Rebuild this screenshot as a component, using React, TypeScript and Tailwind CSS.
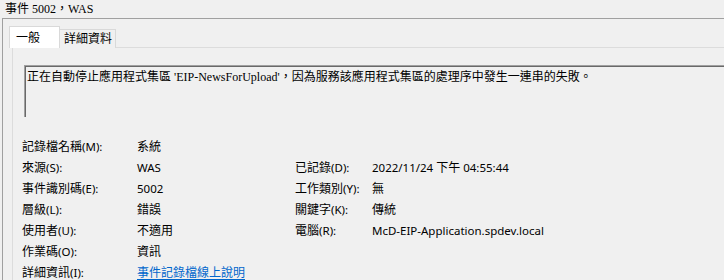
import React from 'react';

const serif = "font-['Liberation_Serif','Noto_Sans_CJK_TC',serif]";

function Zh({ children }: { children: React.ReactNode }) {
  return <span className="text-[12px]">{children}</span>;
}

function Label({ zh, k }: { zh: string; k: string }) {
  return (
    <span>
      <Zh>{zh}</Zh>({k}):
    </span>
  );
}

const rows: [React.ReactNode, React.ReactNode, React.ReactNode, React.ReactNode][] = [
  [<Label zh="記錄檔名稱" k="M" />, <Zh>系統</Zh>, null, null],
  [<Label zh="來源" k="S" />, 'WAS', <Label zh="已記錄" k="D" />, <span>2022/11/24 <Zh>下午</Zh> 04:55:44</span>],
  [<Label zh="事件識別碼" k="E" />, '5002', <Label zh="工作類別" k="Y" />, <Zh>無</Zh>],
  [<Label zh="層級" k="L" />, <Zh>錯誤</Zh>, <Label zh="關鍵字" k="K" />, <Zh>傳統</Zh>],
  [<Label zh="使用者" k="U" />, <Zh>不適用</Zh>, <Label zh="電腦" k="R" />, 'McD-EIP-Application.spdev.local'],
  [<Label zh="作業碼" k="O" />, <Zh>資訊</Zh>, null, null],
  [
    <Label zh="詳細資訊" k="I" />,
    <a href="#" className="text-[#0066cc] underline underline-offset-2">
      <Zh>事件記錄檔線上說明</Zh>
    </a>,
    null,
    null,
  ],
];

export default function App() {
  return (
    <div className="w-[724px] h-[280px] bg-[#f0f0f0] overflow-hidden flex flex-col text-black">
      <div className={`h-[22px] pl-[5px] flex items-center text-[12px] ${serif}`}>事件 5002，WAS</div>

      <div className="ml-[2px] flex-1 border-t border-l border-[#a0a0a0] pt-[7px]">
        <div className={`relative z-10 ml-[6px] h-[22px] flex items-end text-[12px] ${serif}`}>
          <div className="w-[51px] h-[22px] bg-white border border-b-0 border-[#d9d9d9] pl-[6px] flex items-center">
            一般
          </div>
          <div className="w-[56px] h-[19px] bg-[#f0f0f0] border border-b-0 border-l-0 border-[#d9d9d9] pl-[4px] flex items-center">
            詳細資料
          </div>
        </div>

        <div className="ml-[9px] -mt-px h-full border-t border-l border-[#dcdcdc]">
          <div className="ml-[11px] mt-[17px] h-[52px] border-t border-l border-[#a0a0a0]">
            <div className={`h-full border-t border-l border-[#696969] pl-[1px] pt-[2px] leading-[16px] text-[12px] whitespace-nowrap ${serif}`}>
              正在自動停止應用程式集區 'EIP-NewsForUpload'，因為服務該應用程式集區的處理序中發生一連串的失敗。
            </div>
          </div>

          <div className="ml-[9px] mt-[19px] grid grid-cols-[115px_158px_77px_1fr] auto-rows-[21px] items-center text-[11.5px] font-['Noto_Sans','Noto_Sans_CJK_TC',sans-serif] whitespace-nowrap">
            {rows.map((r, i) => (
              <React.Fragment key={i}>
                <div>{r[0]}</div>
                <div>{r[1]}</div>
                <div>{r[2]}</div>
                <div>{r[3]}</div>
              </React.Fragment>
            ))}
          </div>
        </div>
      </div>
    </div>
  );
}
